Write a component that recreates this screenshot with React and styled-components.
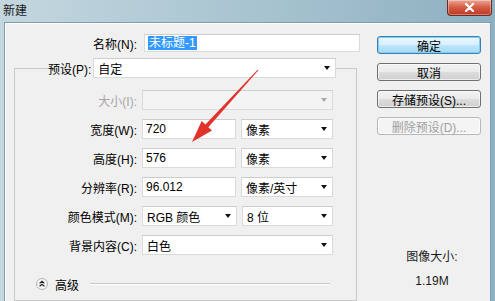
import React from 'react';
import styled, { createGlobalStyle } from 'styled-components';

const GlobalStyle = createGlobalStyle`
  html, body {
    margin: 0;
    padding: 0;
    background: #ffffff;
  }
  body {
    font-family: "Liberation Sans", "Noto Sans CJK SC", sans-serif;
    font-size: 12px;
    color: #000;
  }
`;

const Window = styled.div`
  position: relative;
  width: 495px;
  height: 301px;
  overflow: hidden;
  display: flex;
  flex-direction: column;
  background: linear-gradient(to right, #c4d7df 0%, #abc6d2 45%, #8eb0c1 100%);
`;

const TitleBar = styled.div`
  height: 22px;
  flex: none;
  display: flex;
  justify-content: space-between;
  align-items: flex-start;
  padding: 0 3px;
`;

const Title = styled.span`
  line-height: 22px;
  font-size: 12px;
  color: #1a1a1a;
`;

const CloseButton = styled.div`
  box-sizing: border-box;
  width: 45px;
  height: 16px;
  border: 1px solid #6b2a22;
  border-top: none;
  border-radius: 0 0 4px 4px;
  background: linear-gradient(#eba796, #d45a43 50%, #bd3822);
  box-shadow: inset 0 0 0 1px rgba(255, 255, 255, 0.35);
  display: flex;
  align-items: center;
  justify-content: center;
`;

const Client = styled.div`
  flex: 1;
  margin: 0 4px;
  border: 1px solid #7f9db0;
  border-bottom: none;
  background: #f0f0f0;
  box-shadow: inset 1px 1px 0 #ffffff;
  display: flex;
  min-height: 0;
`;

const LeftPane = styled.div`
  width: 356px;
  box-sizing: border-box;
  padding: 11px 0 0 9px;
  display: flex;
  flex-direction: column;
`;

const NameRow = styled.div`
  display: flex;
  align-items: center;
  gap: 7px;
  height: 18px;
`;

const Label = styled.span`
  width: ${p => p.$w}px;
  flex: none;
  text-align: right;
  white-space: nowrap;
  color: ${p => (p.$disabled ? '#a6a6a6' : '#000')};
`;

const TextBox = styled.div`
  box-sizing: border-box;
  width: ${p => p.$w}px;
  height: ${p => p.$h || 20}px;
  flex: none;
  background: #ffffff;
  border: 1px solid #dadada;
  border-top-color: #cdcdcd;
  padding: 0 3px;
  display: flex;
  align-items: center;
  white-space: nowrap;
`;

const Selected = styled.span`
  background: #3399ff;
  color: #ffffff;
  padding: 0 1px;
  line-height: 14px;
`;

const SelectBox = styled(TextBox)`
  justify-content: space-between;
  padding: 0 4px;
  background: ${p => (p.$disabled ? '#f4f4f4' : '#ffffff')};
`;

const Arrow = styled.span`
  width: 0;
  height: 0;
  border-left: 3.5px solid transparent;
  border-right: 3.5px solid transparent;
  border-top: 4px solid ${p => (p.$disabled ? '#a8a8a8' : '#111')};
  margin-right: 1px;
`;

const GroupBox = styled.fieldset`
  margin: 6px 4px 0 0;
  padding: 0;
  height: 260px;
  border: 1px solid #c9c9c9;
  min-width: 0;
`;

const PresetLegend = styled.legend`
  display: flex;
  align-items: center;
  gap: 2px;
  margin-left: 33px;
  padding: 0;
  height: 20px;
`;

const Rows = styled.div`
  display: flex;
  flex-direction: column;
  gap: 9px;
  padding-top: 12px;
`;

const Row = styled.div`
  display: flex;
  align-items: center;
  gap: 5px;
  height: 20px;
`;

const AdvancedRow = styled.div`
  display: flex;
  align-items: center;
  gap: 7px;
  height: 14px;
  margin-top: 22px;
  padding: 0 26px 0 21px;
`;

const Rule = styled.div`
  flex: 1;
  margin-left: 4px;
  border-top: 1px solid #c6c6c6;
  border-bottom: 1px solid #ffffff;
`;

const RightPane = styled.div`
  flex: 1;
  padding: 13px 0 0 16px;
  display: flex;
  flex-direction: column;
`;

const ButtonStack = styled.div`
  display: flex;
  flex-direction: column;
  gap: 9px;
`;

const Button = styled.div`
  box-sizing: border-box;
  width: 104px;
  height: 18px;
  border: 1px solid ${p => (p.$primary ? '#3c7fb1' : p.$disabled ? '#b5b8ba' : '#707070')};
  border-radius: 3px;
  background: ${p =>
    p.$disabled
      ? '#f4f4f4'
      : p.$primary
      ? 'linear-gradient(#eaf6fd 0%, #d9f0fc 50%, #bee6fd 50%, #a7d9f5 100%)'
      : 'linear-gradient(#f2f2f2 0%, #ebebeb 50%, #dddddd 50%, #cfcfcf 100%)'};
  box-shadow: ${p => (p.$primary ? 'inset 0 0 0 1px #7ed0f3' : 'inset 0 0 0 1px rgba(255,255,255,0.6)')};
  color: ${p => (p.$disabled ? '#a0a0a0' : '#000')};
  display: flex;
  align-items: center;
  justify-content: center;
  white-space: nowrap;
`;

const ImageSize = styled.div`
  width: 104px;
  margin: 110px 0 0 3px;
  text-align: center;
  line-height: 24px;
  color: #1a1a1a;
`;

const ArrowOverlay = styled.svg`
  position: absolute;
  left: 0;
  top: 0;
  pointer-events: none;
`;

const Field = ({ value, w }) => <TextBox $w={w}>{value}</TextBox>;

const Select = ({ value, w, disabled }) => (
  <SelectBox $w={w} $disabled={disabled}>
    <span>{value}</span>
    <Arrow $disabled={disabled} />
  </SelectBox>
);

const AdvancedIcon = () => (
  <svg width="12" height="12" viewBox="0 0 12 12">
    <circle cx="6" cy="6" r="5.5" fill="#f6f6f6" stroke="#b3b3b3" />
    <path d="M3.6 5.4 L6 3.4 L8.4 5.4 M3.6 8.2 L6 6.2 L8.4 8.2" fill="none" stroke="#222" strokeWidth="1.2" />
  </svg>
);

const rows = [
  { label: '宽度(W):', value: '720', unit: '像素' },
  { label: '高度(H):', value: '576', unit: '像素' },
  { label: '分辨率(R):', value: '96.012', unit: '像素/英寸' },
];

const App = () => (
  <>
    <GlobalStyle />
    <Window>
      <TitleBar>
        <Title>新建</Title>
        <CloseButton>
          <svg width="11" height="9" viewBox="0 0 11 9">
            <path d="M2 1 L9 8 M9 1 L2 8" stroke="#ffffff" strokeWidth="2.2" strokeLinecap="round" />
          </svg>
        </CloseButton>
      </TitleBar>
      <Client>
        <LeftPane>
          <NameRow>
            <Label $w={123}>名称(N):</Label>
            <TextBox $w={216} $h={18}>
              <Selected>未标题-1</Selected>
            </TextBox>
          </NameRow>
          <GroupBox>
            <PresetLegend>
              <span>预设(P):</span>
              <Select value="自定" w={243} />
            </PresetLegend>
            <Rows>
              <Row>
                <Label $w={122} $disabled>大小(I):</Label>
                <Select value="" w={191} disabled />
              </Row>
              {rows.map(r => (
                <Row key={r.label}>
                  <Label $w={122}>{r.label}</Label>
                  <Field value={r.value} w={94} />
                  <Select value={r.unit} w={92} />
                </Row>
              ))}
              <Row>
                <Label $w={122}>颜色模式(M):</Label>
                <Select value="RGB 颜色" w={95} />
                <Select value="8 位" w={91} />
              </Row>
              <Row>
                <Label $w={122}>背景内容(C):</Label>
                <Select value="白色" w={191} />
              </Row>
            </Rows>
            <AdvancedRow>
              <AdvancedIcon />
              <span>高级</span>
              <Rule />
            </AdvancedRow>
          </GroupBox>
        </LeftPane>
        <RightPane>
          <ButtonStack>
            <Button $primary>确定</Button>
            <Button>取消</Button>
            <Button>存储预设(S)...</Button>
            <Button $disabled>删除预设(D)...</Button>
          </ButtonStack>
          <ImageSize>
            <div>图像大小:</div>
            <div>1.19M</div>
          </ImageSize>
        </RightPane>
      </Client>
      <ArrowOverlay width="495" height="301" viewBox="0 0 495 301">
        <polygon
          points="258.4,70.3 208.3,127.2 212.0,130.5 192,142 201.7,121.1 205.4,124.5 257.6,69.7"
          fill="#e2322a"
        />
      </ArrowOverlay>
    </Window>
  </>
);

export default App;
